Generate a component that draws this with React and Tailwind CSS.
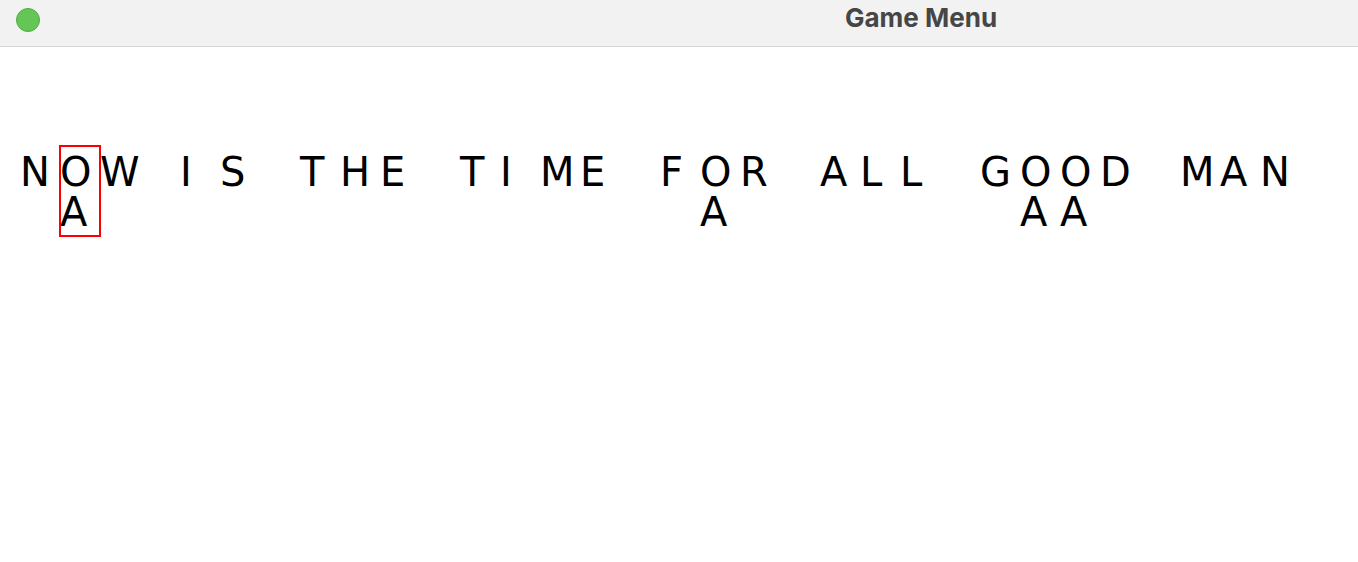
const ROW1 = 'NOW IS THE TIME FOR ALL GOOD MAN'.split('');
// letters shown under the first row, by column index
const ROW2 = { 1: 'A', 17: 'A', 25: 'A', 26: 'A' };
const SELECTED = 1;

function Cell({ top, bottom, selected }) {
  return (
    <div className="relative w-10 flex flex-col">
      <span className="block h-10 leading-[40px]">{top === ' ' ? '\u00a0' : top}</span>
      <span className="block h-10 leading-[40px]">{bottom || '\u00a0'}</span>
      {selected && (
        <div className="absolute -left-px -right-px -top-[7px] -bottom-[5px] border-2 border-[#ff0000]" />
      )}
    </div>
  );
}

export default function App() {
  return (
    <div className="w-[1358px] h-[562px] bg-white overflow-hidden">
      {/* title bar */}
      <div className="h-[47px] bg-[#f1f2f1] border-b border-[#d6d6d6] flex items-center">
        <div className="ml-4 mb-[6px] w-6 h-6 rounded-full bg-[#63c655] border border-[#52ad43]" />
        <div
          className="ml-[805px] mb-[11px] text-[26px] leading-[30px] font-bold text-[#464646]"
          style={{ fontFamily: 'Inter, "Liberation Sans", sans-serif' }}
        >
          Game Menu
        </div>
      </div>

      {/* letter grid */}
      <div
        className="pt-[105px] pl-5 flex text-[40px] text-black"
        style={{ fontFamily: '"DejaVu Sans", Verdana, sans-serif' }}
      >
        {ROW1.map((ch, i) => (
          <Cell key={i} top={ch} bottom={ROW2[i]} selected={i === SELECTED} />
        ))}
      </div>
    </div>
  );
}
